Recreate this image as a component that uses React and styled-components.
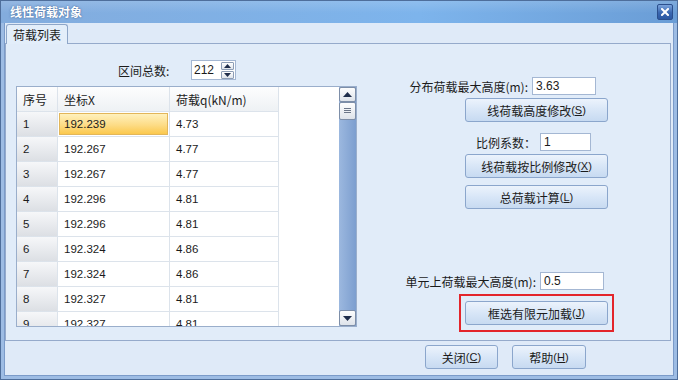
import React from "react";
import styled, { createGlobalStyle } from "styled-components";

const GlobalStyle = createGlobalStyle`
  html, body { margin: 0; padding: 0; background: #dfeaf8; }
  body {
    font-family: "Noto Sans CJK SC", "Liberation Sans", sans-serif;
    font-size: 12px;
    color: #1b1b1b;
  }
`;

const Window = styled.div`
  width: 678px;
  height: 380px;
  box-sizing: border-box;
  border: 1px solid #4e6e9b;
  display: flex;
  flex-direction: column;
  background: #dfeaf8;
`;

const TitleBar = styled.div`
  height: 22px;
  flex: none;
  display: flex;
  align-items: center;
  justify-content: space-between;
  padding: 0 4px 0 9px;
  background:
    linear-gradient(to bottom, rgba(255,255,255,0.14), rgba(255,255,255,0) 55%),
    linear-gradient(to right, #83acdd, #7db4ec 62%, #6a9dd6);
`;

const Title = styled.span`
  color: #fff;
  font-weight: bold;
  font-size: 12px;
  line-height: 22px;
  text-shadow: 0 0 2px rgba(30, 60, 110, 0.75);
`;

const CloseButton = styled.div`
  width: 16px;
  height: 16px;
  box-sizing: border-box;
  border: 1px solid #2b4f8d;
  border-radius: 2px;
  background: linear-gradient(to bottom, #7aa3dc, #3a67b0 55%, #2c58a2);
  display: flex;
  align-items: center;
  justify-content: center;
`;

const Frame = styled.div`
  flex: 1;
  display: flex;
  border: solid #9dbce4;
  border-width: 0 3px 3px 3px;
`;

const Client = styled.div`
  flex: 1;
  display: flex;
  flex-direction: column;
  border: solid #7b9bc9;
  border-width: 0 1px 1px 1px;
  padding-top: 1px;
  background: #dfeaf8;
`;

const TabRow = styled.div`
  display: flex;
  padding-left: 1px;
  height: 20px;
  position: relative;
  z-index: 1;
`;

const Tab = styled.div`
  height: 20px;
  box-sizing: border-box;
  padding: 0 6px;
  border: 1px solid #8ea6c8;
  border-bottom: none;
  border-radius: 3px 3px 0 0;
  background: #e3eefa;
  line-height: 19px;
  font-size: 12px;
`;

const Panel = styled.div`
  height: 298px;
  box-sizing: border-box;
  margin: -1px 2px 0 0;
  border: 1px solid #95aacb;
  background: #e1ecf9;
  display: flex;
  padding: 16px 0 0 10px;
`;

const LeftColumn = styled.div`
  width: 341px;
  display: flex;
  flex-direction: column;
`;

const SpinRow = styled.div`
  height: 20px;
  display: flex;
  align-items: center;
  padding-left: 102px;
`;

const SpinLabel = styled.span`
  width: 73px;
  font-size: 12px;
`;

const SpinBox = styled.div`
  width: 45px;
  height: 20px;
  box-sizing: border-box;
  border: 1px solid #a4b7d3;
  background: #fff;
  display: flex;
  align-items: center;
  justify-content: space-between;
  padding: 0 1px 0 2px;
`;

const SpinValue = styled.span`
  font-family: "Liberation Sans", sans-serif;
  font-size: 12px;
`;

const SpinButtons = styled.div`
  display: flex;
  flex-direction: column;
  gap: 1px;
`;

const SpinButton = styled.div`
  width: 13px;
  height: 8px;
  box-sizing: border-box;
  border: 1px solid #8d9db5;
  border-radius: 1px;
  background: linear-gradient(to bottom, #ffffff, #dfe4eb);
  display: flex;
  align-items: center;
  justify-content: center;
`;

const Grid = styled.div`
  margin-top: 6px;
  height: 241px;
  box-sizing: border-box;
  border: 1px solid #9aaecb;
  background: #fff;
  display: flex;
`;

const Table = styled.div`
  flex: 1;
  overflow: hidden;
`;

const Row = styled.div`
  display: flex;
  height: 25px;
`;

const Cell = styled.div`
  width: ${(p) => p.$w}px;
  box-sizing: border-box;
  height: 25px;
  padding-left: ${(p) => p.$pad || 6}px;
  display: flex;
  align-items: center;
  border-right: 1px solid #dce3eb;
  border-bottom: 1px solid #dce3eb;
  font-family: "Liberation Sans", "Noto Sans CJK SC", sans-serif;
  font-size: 11.5px;
  background: ${(p) =>
    p.$head
      ? "linear-gradient(to bottom, #fdfdfe, #eef1f4)"
      : p.$rowHead
      ? "linear-gradient(to bottom, #f6f7f9, #dcdfe4)"
      : "#fff"};
`;

const HeadText = styled.span`
  font-family: "Noto Sans CJK SC", "Liberation Sans", sans-serif;
  font-size: 12px;
`;

const SelectedBox = styled.div`
  flex: 1;
  align-self: stretch;
  margin: 1px 1px 1px -5px;
  padding-left: 4px;
  display: flex;
  align-items: center;
  border: 1px solid #e2b65a;
  background: linear-gradient(to bottom, #fff1bd, #fddc86 55%, #fbc84d);
`;

const ScrollBar = styled.div`
  width: 17px;
  display: flex;
  flex-direction: column;
  background: linear-gradient(to right, #9cb8df, #7c9ecf);
`;

const ScrollButton = styled.div`
  height: ${(p) => p.$h}px;
  box-sizing: border-box;
  border: 1px solid #7d8ea8;
  border-radius: 2px;
  background: linear-gradient(to bottom, #fdfdfd, #dee3ea);
  display: flex;
  align-items: center;
  justify-content: center;
  flex: none;
`;

const ScrollTrack = styled.div`
  flex: 1;
`;

const RightColumn = styled.div`
  margin-left: 23px;
  width: 289px;
  display: flex;
  flex-direction: column;
  padding-top: 17px;
`;

const FieldRow = styled.div`
  display: flex;
  align-items: center;
  height: 18px;
  margin-top: ${(p) => p.$mt || 0}px;
`;

const FieldLabel = styled.span`
  width: ${(p) => p.$w}px;
  text-align: right;
  margin-right: 4px;
  font-size: 12px;
  white-space: nowrap;
`;

const TextInput = styled.div`
  width: ${(p) => p.$w}px;
  height: 18px;
  box-sizing: border-box;
  border: 1px solid #a4b7d3;
  background: #fff;
  padding-left: 3px;
  font-family: "Liberation Sans", sans-serif;
  font-size: 12px;
  line-height: 16px;
`;

const Button = styled.div`
  width: ${(p) => p.$w || 143}px;
  height: 24px;
  box-sizing: border-box;
  margin-top: ${(p) => p.$mt || 0}px;
  margin-left: ${(p) => p.$ml || 0}px;
  border: 1px solid #8ba6cc;
  border-radius: 3px;
  background: linear-gradient(to bottom, #ecf3fc, #d8e6f7 50%, #c7daf1);
  display: flex;
  align-items: center;
  justify-content: center;
  font-size: 12px;
  flex: none;
`;

const Key = styled.span`
  font-family: "Liberation Sans", sans-serif;
  font-size: 11px;
  u { text-decoration: underline; }
`;

const Highlight = styled.div`
  margin: 4px 0 0 79px;
  align-self: flex-start;
  border: 2px solid #e3252b;
  padding: 5px 4px;
`;

const Footer = styled.div`
  display: flex;
  gap: 14px;
  padding: 4px 0 0 420px;
`;

const rows = [
  ["1", "192.239", "4.73"],
  ["2", "192.267", "4.77"],
  ["3", "192.267", "4.77"],
  ["4", "192.296", "4.81"],
  ["5", "192.296", "4.81"],
  ["6", "192.324", "4.86"],
  ["7", "192.324", "4.86"],
  ["8", "192.327", "4.81"],
  ["9", "192.327", "4.81"],
];

const Label = ({ text, k }) => (
  <>
    {text}
    <Key>
      (<u>{k}</u>)
    </Key>
  </>
);

const Arrow = ({ up, size = 4 }) => (
  <svg width={size * 2 + 1} height={size + 1} viewBox={`0 0 ${size * 2 + 1} ${size + 1}`}>
    <polygon
      points={
        up
          ? `0,${size + 1} ${size * 2 + 1},${size + 1} ${size + 0.5},0`
          : `0,0 ${size * 2 + 1},0 ${size + 0.5},${size + 1}`
      }
      fill="#1f2d4a"
    />
  </svg>
);

export default function App() {
  return (
    <>
      <GlobalStyle />
      <Window>
        <TitleBar>
          <Title>线性荷载对象</Title>
          <CloseButton>
            <svg width="8" height="8" viewBox="0 0 8 8">
              <path d="M1 1 L7 7 M7 1 L1 7" stroke="#fff" strokeWidth="2" strokeLinecap="square" />
            </svg>
          </CloseButton>
        </TitleBar>
        <Frame>
          <Client>
            <TabRow>
              <Tab>荷载列表</Tab>
            </TabRow>
            <Panel>
              <LeftColumn>
                <SpinRow>
                  <SpinLabel>区间总数:</SpinLabel>
                  <SpinBox>
                    <SpinValue>212</SpinValue>
                    <SpinButtons>
                      <SpinButton>
                        <Arrow up size={3} />
                      </SpinButton>
                      <SpinButton>
                        <Arrow size={3} />
                      </SpinButton>
                    </SpinButtons>
                  </SpinBox>
                </SpinRow>
                <Grid>
                  <Table>
                    <Row>
                      <Cell $w={41} $head>
                        <HeadText>序号</HeadText>
                      </Cell>
                      <Cell $w={112} $head>
                        <HeadText>坐标X</HeadText>
                      </Cell>
                      <Cell $w={109} $head>
                        <HeadText>荷载q(kN/m)</HeadText>
                      </Cell>
                    </Row>
                    {rows.map(([n, x, q], i) => (
                      <Row key={n}>
                        <Cell $w={41} $rowHead>
                          {n}
                        </Cell>
                        <Cell $w={112}>
                          {i === 0 ? <SelectedBox>{x}</SelectedBox> : x}
                        </Cell>
                        <Cell $w={109}>{q}</Cell>
                      </Row>
                    ))}
                  </Table>
                  <ScrollBar>
                    <ScrollButton $h={15}>
                      <Arrow up />
                    </ScrollButton>
                    <ScrollButton $h={18}>
                      <svg width="7" height="6" viewBox="0 0 7 6">
                        <path d="M0 0.5 H7 M0 2.5 H7 M0 4.5 H7" stroke="#6b7688" strokeWidth="1" />
                      </svg>
                    </ScrollButton>
                    <ScrollTrack />
                    <ScrollButton $h={16}>
                      <Arrow />
                    </ScrollButton>
                  </ScrollBar>
                </Grid>
              </LeftColumn>
              <RightColumn>
                <FieldRow>
                  <FieldLabel $w={148}>分布荷载最大高度(m):</FieldLabel>
                  <TextInput $w={64}>3.63</TextInput>
                </FieldRow>
                <Button $mt={3} $ml={85}>
                  <Label text="线荷载高度修改" k="S" />
                </Button>
                <FieldRow $mt={11}>
                  <FieldLabel $w={156}>比例系数：</FieldLabel>
                  <TextInput $w={51}>1</TextInput>
                </FieldRow>
                <Button $mt={3} $ml={85}>
                  <Label text="线荷载按比例修改" k="X" />
                </Button>
                <Button $mt={7} $ml={85}>
                  <Label text="总荷载计算" k="L" />
                </Button>
                <FieldRow $mt={63}>
                  <FieldLabel $w={156}>单元上荷载最大高度(m):</FieldLabel>
                  <TextInput $w={64}>0.5</TextInput>
                </FieldRow>
                <Highlight>
                  <Button>
                    <Label text="框选有限元加载" k="J" />
                  </Button>
                </Highlight>
              </RightColumn>
            </Panel>
            <Footer>
              <Button $w={73}>
                <Label text="关闭" k="C" />
              </Button>
              <Button $w={74}>
                <Label text="帮助" k="H" />
              </Button>
            </Footer>
          </Client>
        </Frame>
      </Window>
    </>
  );
}
